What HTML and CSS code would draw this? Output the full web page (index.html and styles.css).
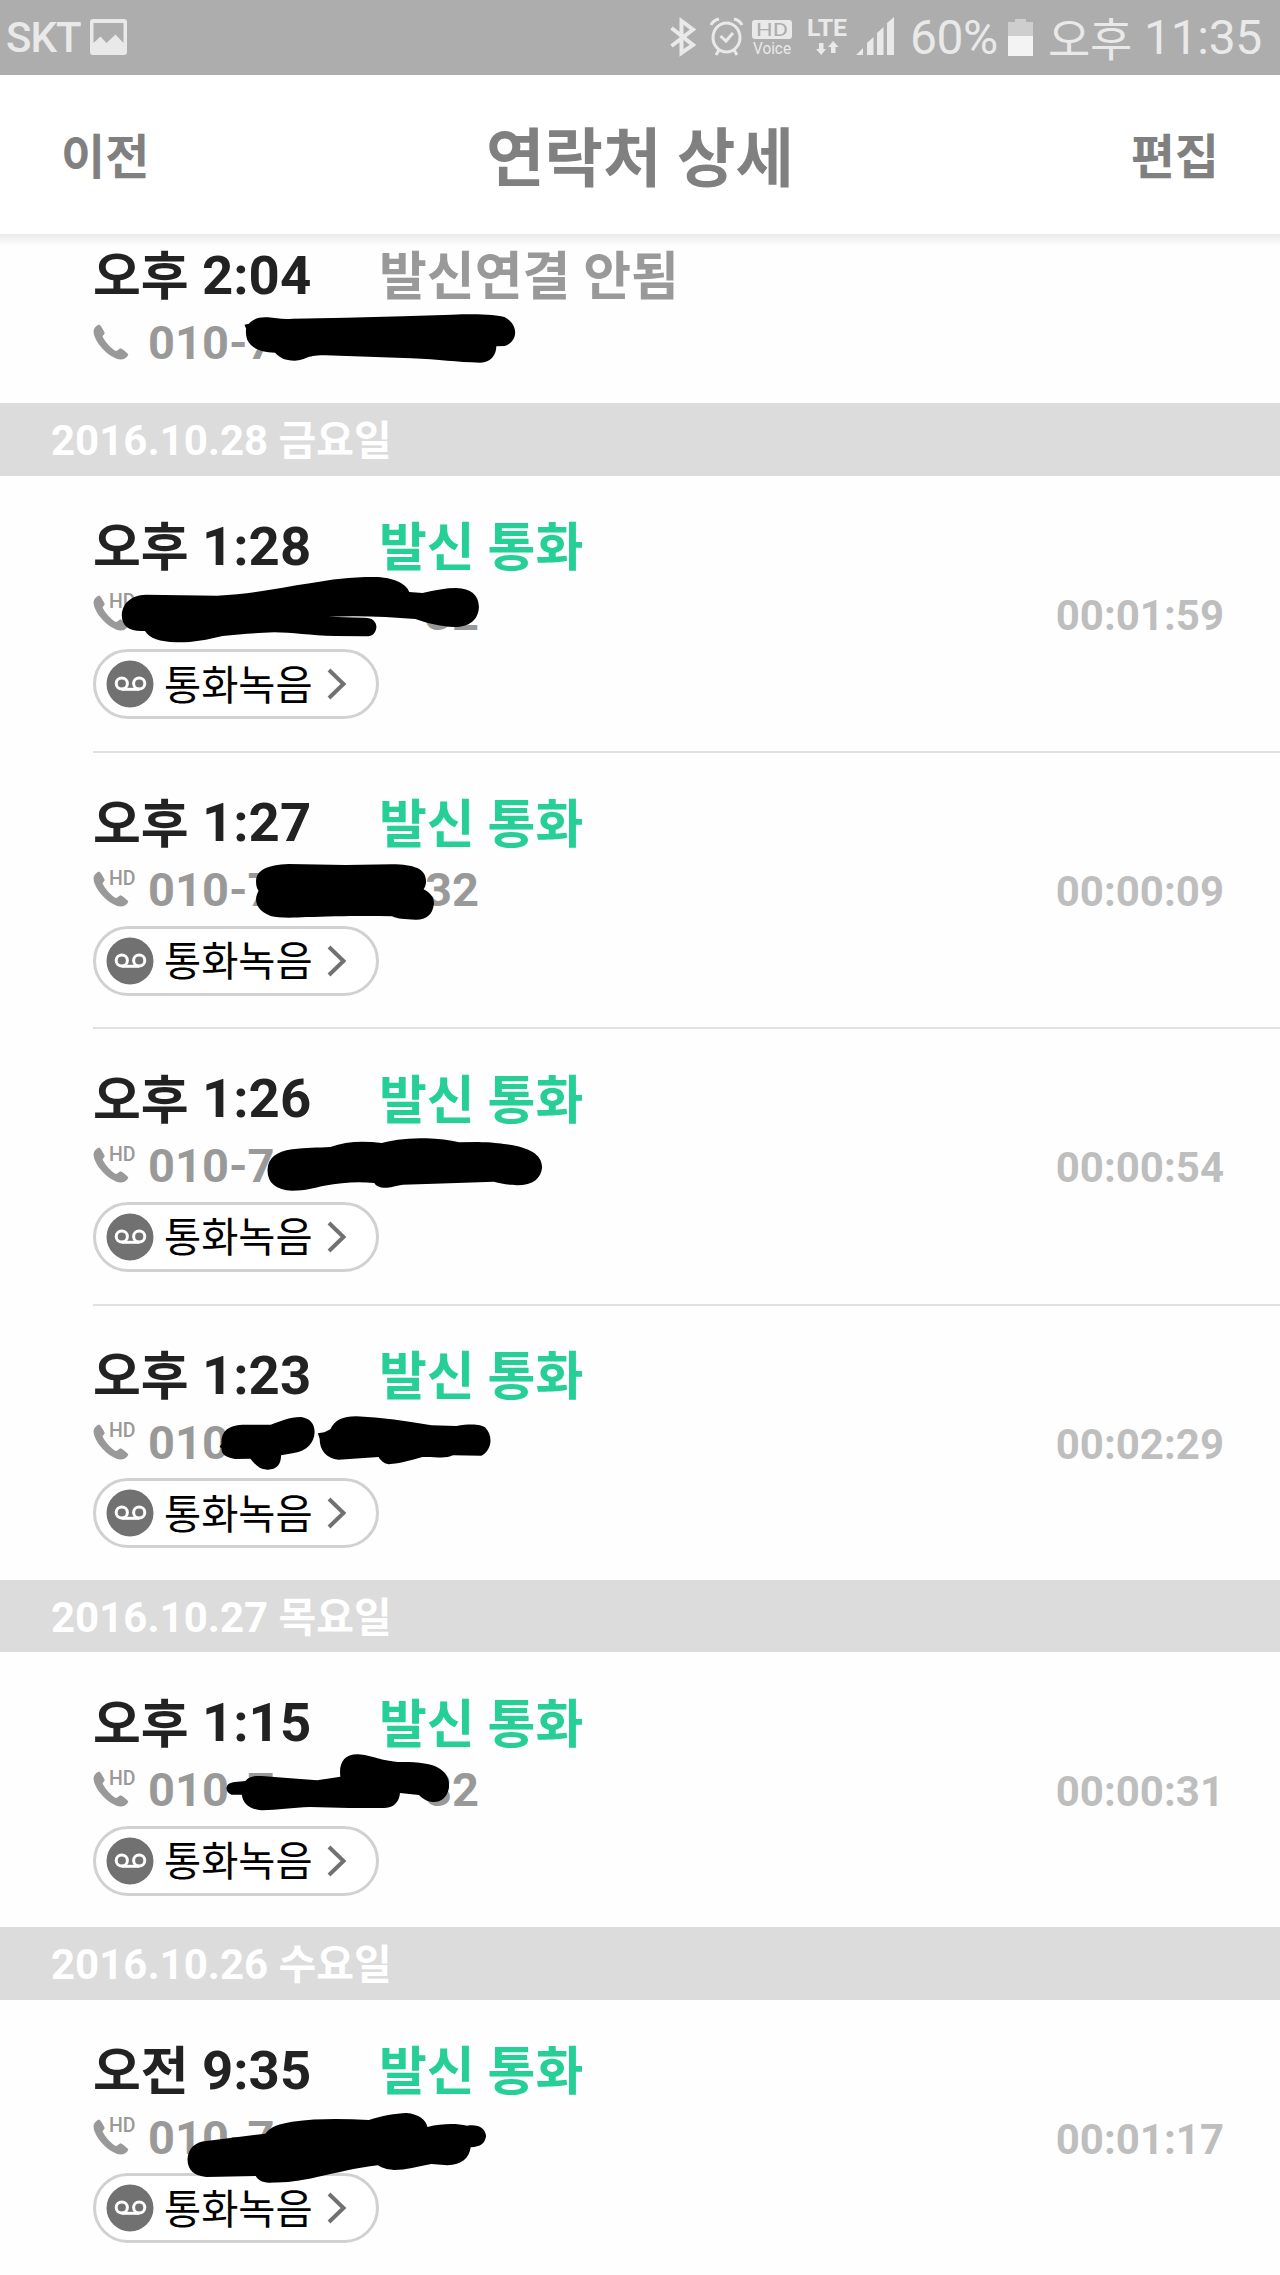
FILE: index.html
```html
<!DOCTYPE html>
<html lang="ko">
<head>
  <meta charset="UTF-8">
  <title>연락처 상세</title>
  <link rel="stylesheet" href="styles.css">
</head>
<body>
  <!-- 아이콘 정의 -->
  <svg class="defs" width="0" height="0">
    <symbol id="phone" viewBox="0 0 36 36">
      <path d="M6.300 0.500C3 1.500 .5 4.500 .6 8C1 17 15 34.500 28 35.500C32 35.500 34.600 33 35.300 30.300C33 28 30 25.500 27.500 24.300C25.500 25 25 26.500 23 27C19 25.500 11.500 17 9.500 12.500C10 11 11.500 10.500 11.700 9C10.500 6 8.500 2.500 6.300 .5Z"/>
    </symbol>
    <symbol id="tape" viewBox="0 0 48 48">
      <circle cx="24" cy="24" r="23.500" fill="#717171"/>
      <g fill="none" stroke="#fff" stroke-width="3">
        <circle cx="15.800" cy="23.500" r="5.600"/>
        <circle cx="33.200" cy="23.500" r="5.600"/>
        <path d="M15.800 29.300H33.200"/>
      </g>
    </symbol>
    <symbol id="arrow" viewBox="0 0 20 32">
      <path d="M2 2L16.500 16L2 30" fill="none" stroke="#717171" stroke-width="4"/>
    </symbol>
  </svg>

  <div class="status-bar">
    <span class="carrier">SKT</span>
    <svg class="picture" width="37" height="36" viewBox="0 0 37 36">
      <path fill-rule="evenodd" d="M3 0H34Q37 0 37 3V33Q37 36 34 36H3Q0 36 0 33V3Q0 0 3 0ZM3.500 4V24L10.500 17.500L16.500 24L25.500 15.500L33.500 24V4Z" fill="#e9e9e9"/>
    </svg>
    <svg class="indicators" width="230" height="44" viewBox="666 15 230 44">
      <path d="M671.500 28L693 45L681.500 53V21L693 29.500L671.500 46" fill="none" stroke="#e9e9e9" stroke-width="4"/>
      <g fill="none" stroke="#e9e9e9" stroke-width="3">
        <ellipse cx="726.500" cy="37.500" rx="13.500" ry="14.500"/>
        <path d="M720.500 36L726 41L733 33M711 25Q713 20.500 719 19M742 25Q740 20.500 734 19M719 50L716 55M734 50L737 55"/>
      </g>
      <rect x="752" y="20" width="40" height="19" rx="3" fill="#e9e9e9"/>
      <text x="756" y="36" class="hd-badge" textLength="32" lengthAdjust="spacingAndGlyphs">HD</text>
      <text x="753" y="53.500" class="voice" textLength="38" lengthAdjust="spacingAndGlyphs">Voice</text>
      <text x="807" y="36" class="lte" textLength="40" lengthAdjust="spacingAndGlyphs">LTE</text>
      <path d="M819 43H823.500V49H826L821.200 55L816 49H819ZM831 53H835.500V47H838.500L833.200 41L828 47H831Z" fill="#e9e9e9"/>
      <path d="M856 55L863 48V55ZM867 55V43L873.500 37V55ZM877 55V33L883.500 27V55ZM887 55V23L894 17V55Z" fill="#e9e9e9"/>
    </svg>
    <span class="percent">60%</span>
    <svg class="battery" width="25" height="37" viewBox="0 0 25 37">
      <path d="M0 3H7V0H18V3H25V17H0Z" fill="#cecece"/>
      <path d="M0 17H25V37H0Z" fill="#f3f3f3"/>
    </svg>
    <span class="clock"><span class="ampm">오후</span>11:35</span>
  </div>

  <div class="header">
    <span class="header-btn">이전</span>
    <span class="header-title">연락처 상세</span>
    <span class="header-btn">편집</span>
  </div>

  <div class="call call-cut">
    <div class="call-top"><span class="time"><span class="ko">오후</span>2:04</span><span class="type type-missed">발신연결 안됨</span></div>
    <div class="call-info"><svg class="phone"><use href="#phone"/></svg><span class="hd"></span><span class="number">010-7</span></div>
    <svg class="mark mark-1" viewBox="0 0 1568 720" preserveAspectRatio="none"><path d="M452 284L463 281C475 265 490 260 510 262C530 265 545 268 570 266L700 263L840 259L960 254C1020 251 1070 253 1090 262C1125 285 1122 335 1090 348L1069 349C1069 375 1055 398 1030 398C970 397 930 388 860 385L650 376C600 375 605 391 575 392C550 390 540 385 527 368C490 366 470 355 459 330C455 315 455 305 456 296Z"/></svg>
  </div>

  <div class="date">2016.10.28 <span class="ko">금요일</span></div>

  <div class="call">
    <div class="call-top"><span class="time"><span class="ko">오후</span>1:28</span><span class="type">발신 통화</span></div>
    <div class="call-info"><svg class="phone"><use href="#phone"/></svg><span class="hd">HD</span><span class="number"></span><span class="number-end">32</span><span class="duration">00:01:59</span></div>
    <div class="record"><svg class="tape"><use href="#tape"/></svg><span class="record-text">통화녹음</span><svg class="arrow"><use href="#arrow"/></svg></div>
    <svg class="mark mark-2" viewBox="0 0 1568 720" preserveAspectRatio="none"><path d="M173 345C174 310 200 285 240 284L440 287C540 283 620 262 700 250C760 238 810 231 880 231C930 231 970 250 978 276L1015 279C1050 270 1080 264 1110 264C1150 265 1172 285 1173 320C1172 360 1145 381 1105 381C1060 379 1030 370 995 357C920 350 840 346 750 350L850 353C875 352 886 365 886 381C884 400 875 410 855 409L770 408C700 407 650 397 600 397C540 399 500 403 455 408C410 420 370 428 325 427C280 425 250 415 238 393C195 396 173 380 173 345Z"/></svg>
  </div>
  <div class="call">
    <div class="call-top"><span class="time"><span class="ko">오후</span>1:27</span><span class="type">발신 통화</span></div>
    <div class="call-info"><svg class="phone"><use href="#phone"/></svg><span class="hd">HD</span><span class="number">010-7</span><span class="number-end">32</span><span class="duration">00:00:09</span></div>
    <div class="record"><svg class="tape"><use href="#tape"/></svg><span class="record-text">통화녹음</span><svg class="arrow"><use href="#arrow"/></svg></div>
    <svg class="mark mark-3" viewBox="0 0 1568 720" preserveAspectRatio="none"><path d="M549 305C549 270 580 255 640 252L800 255L930 253C990 254 1025 265 1025 305C1024 318 1021 322 1018 328C1040 340 1048 355 1047 372C1043 405 1025 420 995 419C965 418 945 417 930 409C850 406 760 409 690 411C650 414 610 414 590 408C555 395 548 370 549 355C550 345 553 340 556 332C550 322 549 315 549 305Z"/></svg>
  </div>
  <div class="call">
    <div class="call-top"><span class="time"><span class="ko">오후</span>1:26</span><span class="type">발신 통화</span></div>
    <div class="call-info"><svg class="phone"><use href="#phone"/></svg><span class="hd">HD</span><span class="number">010-7</span><span class="duration">00:00:54</span></div>
    <div class="record"><svg class="tape"><use href="#tape"/></svg><span class="record-text">통화녹음</span><svg class="arrow"><use href="#arrow"/></svg></div>
    <svg class="mark mark-4" viewBox="0 0 1568 720" preserveAspectRatio="none"><path d="M581 330C582 295 605 275 650 268C690 263 720 263 757 261C800 243 850 242 901 249C940 238 980 235 1025 235C1060 236 1090 240 1118 247L1170 246C1210 247 1230 250 1250 253C1310 262 1349 280 1350 322C1347 355 1325 376 1280 376C1250 375 1235 370 1215 365L1090 370L960 374C935 378 925 384 905 383C890 381 885 377 880 369C830 363 790 368 740 377C710 384 690 391 650 392C605 390 581 370 581 330Z"/></svg>
  </div>
  <div class="call call-last">
    <div class="call-top"><span class="time"><span class="ko">오후</span>1:23</span><span class="type">발신 통화</span></div>
    <div class="call-info"><svg class="phone"><use href="#phone"/></svg><span class="hd">HD</span><span class="number">010</span><span class="duration">00:02:29</span></div>
    <div class="record"><svg class="tape"><use href="#tape"/></svg><span class="record-text">통화녹음</span><svg class="arrow"><use href="#arrow"/></svg></div>
    <svg class="mark mark-5" viewBox="0 0 1568 720" preserveAspectRatio="none"><path d="M447 320L452 312C450 275 470 256 510 254L590 254C620 243 640 231 675 231C700 235 712 250 713 275C712 310 690 333 655 339L619 346C619 375 605 390 580 389C555 388 545 370 533 356L490 357C465 352 452 345 452 325ZM722 280L740 277L757 268C770 240 790 229 830 229C900 232 970 243 1040 256L1110 258C1150 250 1180 253 1190 262C1215 290 1208 330 1180 347L1100 346C1080 357 1055 350 1015 351C980 361 955 370 920 373C905 370 897 360 892 351L780 359C745 355 727 330 727 296Z"/></svg>
  </div>

  <div class="date">2016.10.27 <span class="ko">목요일</span></div>

  <div class="call call-last">
    <div class="call-top"><span class="time"><span class="ko">오후</span>1:15</span><span class="type">발신 통화</span></div>
    <div class="call-info"><svg class="phone"><use href="#phone"/></svg><span class="hd">HD</span><span class="number">010-7</span><span class="number-end">32</span><span class="duration">00:00:31</span></div>
    <div class="record"><svg class="tape"><use href="#tape"/></svg><span class="record-text">통화녹음</span><svg class="arrow"><use href="#arrow"/></svg></div>
    <svg class="mark mark-6" viewBox="0 0 1568 720" preserveAspectRatio="none"><path d="M466 325C468 312 475 308 490 306L519 303C530 290 540 287 565 288L720 301L785 290C780 250 795 222 835 223C870 225 890 240 945 246C1000 245 1040 250 1060 264C1085 280 1091 300 1089 325C1083 355 1065 367 1045 366C1025 365 1015 355 1005 345L952 339C950 365 935 383 910 384L810 384L700 381C650 383 610 390 565 391C530 388 512 370 509 344L480 344C471 340 466 333 466 325Z"/></svg>
  </div>

  <div class="date">2016.10.26 <span class="ko">수요일</span></div>

  <div class="call call-last">
    <div class="call-top"><span class="time"><span class="ko">오전</span>9:35</span><span class="type">발신 통화</span></div>
    <div class="call-info"><svg class="phone"><use href="#phone"/></svg><span class="hd">HD</span><span class="number">010-7</span><span class="duration">00:01:17</span></div>
    <div class="record"><svg class="tape"><use href="#tape"/></svg><span class="record-text">통화녹음</span><svg class="arrow"><use href="#arrow"/></svg></div>
    <svg class="mark mark-7" viewBox="0 0 1568 720" preserveAspectRatio="none"><path d="M357 388C358 355 380 335 410 333L575 311C590 290 610 282 650 275C720 265 790 266 865 270C900 258 940 250 970 249C1005 252 1025 270 1029 291C1070 280 1110 280 1140 287C1170 282 1190 292 1193 318C1190 340 1178 350 1150 352C1145 385 1125 405 1085 406L1040 402C1000 410 970 420 935 420C910 418 900 412 890 406C830 413 780 428 720 441C670 453 640 458 585 458C565 457 555 450 548 438L410 441C375 438 357 420 357 388Z"/></svg>
  </div>
</body>
</html>
```
FILE: styles.css
```css
* {
  box-sizing: border-box;
}
body {
  margin: 0;
  width: 1280px;
  height: 2275px;
  overflow: hidden;
  background-color: #fefefe;
  font-family: Roboto, "Noto Sans CJK KR", sans-serif;
  white-space: nowrap;
}
.defs {
  display: block;
}

/* 상태 표시줄 */
.status-bar {
  display: flex;
  align-items: center;
  height: 74.7px;
  padding-left: 6px;
  background-color: #adadad;
  color: #e9e9e9;
}
.carrier {
  width: 84px;
  font-size: 42px;
  font-weight: 500;
  letter-spacing: -1px;
}
.indicators {
  margin-left: 539px;
}
.hd-badge {
  font-size: 18px;
  fill: #adadad;
}
.voice {
  font-size: 16px;
  fill: #e9e9e9;
}
.lte {
  font-size: 23px;
  font-weight: 700;
  fill: #e9e9e9;
}
.percent {
  width: 98px;
  margin-left: 14px;
  font-size: 48px;
  letter-spacing: -.5px;
}
.clock {
  display: flex;
  align-items: center;
  margin-left: 15px;
  font-size: 48px;
  letter-spacing: -.3px;
}
.ampm {
  width: 96px;
  padding-bottom: 3px;
  font-size: 46px;
}

.header {
  display: flex;
  align-items: center;
  justify-content: space-between;
  position: relative;
  height: 159.3px;
  padding: 0 61px 3px;
  background-color: #fff;
  color: #808080;
  font-weight: 700;
}
.header::after {
  content: "";
  position: absolute;
  left: 0;
  right: 0;
  top: 100%;
  height: 12px;
  background: linear-gradient(#ebebeb, #fefefe);
}
.header-btn {
  font-size: 48px;
}
.header-title {
  font-size: 63.5px;
}

.date {
  height: 72.5px;
  padding-left: 51px;
  background-color: #dcdcdc;
  color: #fff;
  font-size: 42px;
  font-weight: 700;
  line-height: 76px;
}
.date .ko {
  font-size: 41px;
}

.call {
  position: relative;
  height: 276.2px;
  padding: 40px 0 0 93px;
}
.call-last {
  height: 275.2px;
}
/* 구분선 */
.call:not(.call-last):not(.call-cut)::after {
  content: "";
  position: absolute;
  left: 93px;
  right: 0;
  bottom: -1px;
  height: 2px;
  background-color: #e1e1e1;
}
.call-cut {
  height: 169.5px;
  padding-top: 11px;
}
.call-top {
  display: flex;
  align-items: center;
  height: 60px;
}
.time {
  display: flex;
  width: 286px;
  align-items: center;
  color: #222;
  font-size: 54.5px;
  font-weight: 700;
}
.time .ko {
  width: 109px;
  padding-bottom: 4px;
  font-size: 52px;
}
.type {
  padding-bottom: 4px;
  color: #26cf96;
  font-size: 52px;
  font-weight: 700;
}
.type-missed {
  color: #999;
}
.call-info {
  display: flex;
  align-items: center;
  height: 56px;
  margin-top: 9px;
  padding-right: 56px;
  color: #999;
}
.phone {
  width: 36px;
  height: 36px;
  fill: #999;
}
.hd {
  width: 39px;
  margin-left: -20px;
  padding-bottom: 22px;
  font-size: 19.5px;
  font-weight: 500;
}
.number {
  width: 277px;
  padding-top: 1px;
  font-size: 47px;
  font-weight: 700;
}
.number:empty {
  height: 1px;
}
.number-end {
  padding-top: 1px;
  font-size: 47px;
  font-weight: 700;
}
.duration {
  margin-left: auto;
  padding-top: 5px;
  color: #bebebe;
  font-size: 42px;
  font-weight: 700;
}
.record {
  display: flex;
  align-items: center;
  width: 286px;
  height: 70px;
  margin-top: 8.5px;
  padding-left: 10px;
  border: 3.5px solid #d1d1d1;
  border-radius: 35px;
  background-color: #fff;
}
.record-text {
  padding-bottom: 4px;
  color: #000;
  font-size: 40.4px;
}
.tape {
  width: 48px;
  height: 48px;
  margin-right: 10px;
}
.arrow {
  width: 20px;
  height: 32px;
  margin-left: 14px;
}

/* 번호를 가리는 펜 자국 */
.mark {
  position: absolute;
  left: 60px;
  width: 560px;
  height: 240px;
}
.mark-1 {
  top: -3.5px;
  width: 640px;
}
.mark-2 {
  top: 24.5px;
}
.mark-3 {
  top: 28px;
}
.mark-4 {
  top: 32px;
}
.mark-5 {
  top: 35.5px;
}
.mark-6 {
  top: 27.5px;
}
.mark-7 {
  top: 30px;
}
```
